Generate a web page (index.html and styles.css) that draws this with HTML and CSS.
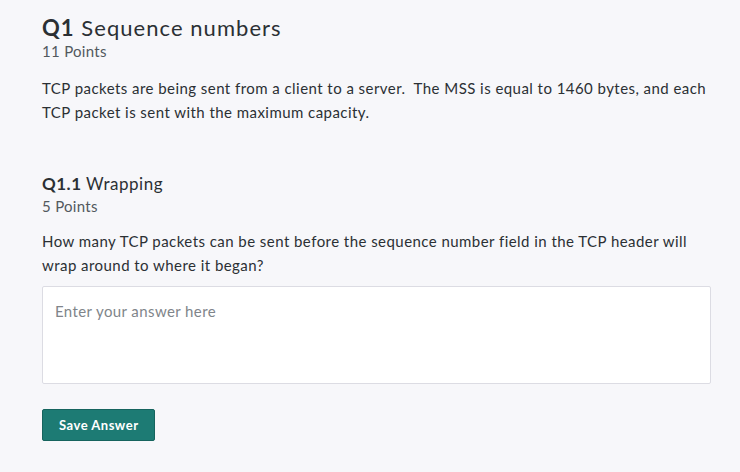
FILE: index.html
```html
<!DOCTYPE html>
<html lang="en">
  <head>
    <meta charset="UTF-8" />
    <title>Q1 Sequence numbers</title>
    <link rel="stylesheet" href="styles.css">
  </head>
  <body>
    <div class="question">
      <h1 class="question-title"><b>Q1</b> Sequence numbers</h1>
      <div class="points">11 Points</div>
      <p class="prompt">
        TCP packets are being sent from a client to a server.&nbsp; The MSS is equal to 1460 bytes, and each
        TCP packet is sent with the maximum capacity.
      </p>

      <div class="subquestion">
        <h2 class="subquestion-title"><b>Q1.1</b> Wrapping</h2>
        <div class="points">5 Points</div>
        <p class="prompt">
          How many TCP packets can be sent before the sequence number field in the TCP header will
          wrap around to where it began?
        </p>
        <textarea class="answer" placeholder="Enter your answer here"></textarea>
        <button class="save-button">Save Answer</button>
      </div>
    </div>
  </body>
</html>
```

FILE: styles.css
```css
body {
  font-family: Lato, "Open Sans", sans-serif;
  background-color: #f7f7fa;
  color: #2b3034;
  margin: 0;
  padding: 14px 29px 0 42px;
}
.question-title {
  font-size: 22px;
  font-weight: normal;
  letter-spacing: 1.05px;
  margin: 0;
  line-height: 28px;
}
.question-title b,
.subquestion-title b {
  font-weight: bold;
}
.points {
  font-size: 15px;
  letter-spacing: 0.3px;
  color: #52595e;
  line-height: 20px;
  margin-top: -1px;
}
.prompt {
  font-size: 15px;
  letter-spacing: 0.45px;
  line-height: 24px;
  margin: 15px 0 0;
}
.subquestion {
  margin-top: 48px;
}
.subquestion-title {
  font-size: 17px;
  font-weight: normal;
  letter-spacing: 0.5px;
  margin: 0;
  line-height: 24px;
}
.subquestion .points {
  margin-top: 0;
}
.subquestion .prompt {
  margin-top: 13px;
}
.answer {
  display: block;
  box-sizing: border-box;
  width: 100%;
  height: 98px;
  margin-top: 9px;
  padding: 15px 12px 12px;
  border: 1px solid #dcdce3;
  border-radius: 2px;
  background: #fff;
  font-family: inherit;
  font-size: 15px;
  letter-spacing: 0.4px;
  resize: none;
}
.answer::placeholder {
  color: #80858a;
}
.save-button {
  margin-top: 25px;
  height: 32px;
  padding: 0 16px;
  background-color: #1d7b74;
  color: #fff;
  border: 1px solid #16645e;
  border-radius: 2px;
  font-family: inherit;
  font-size: 13px;
  font-weight: bold;
  letter-spacing: 0.5px;
  cursor: pointer;
}
```
